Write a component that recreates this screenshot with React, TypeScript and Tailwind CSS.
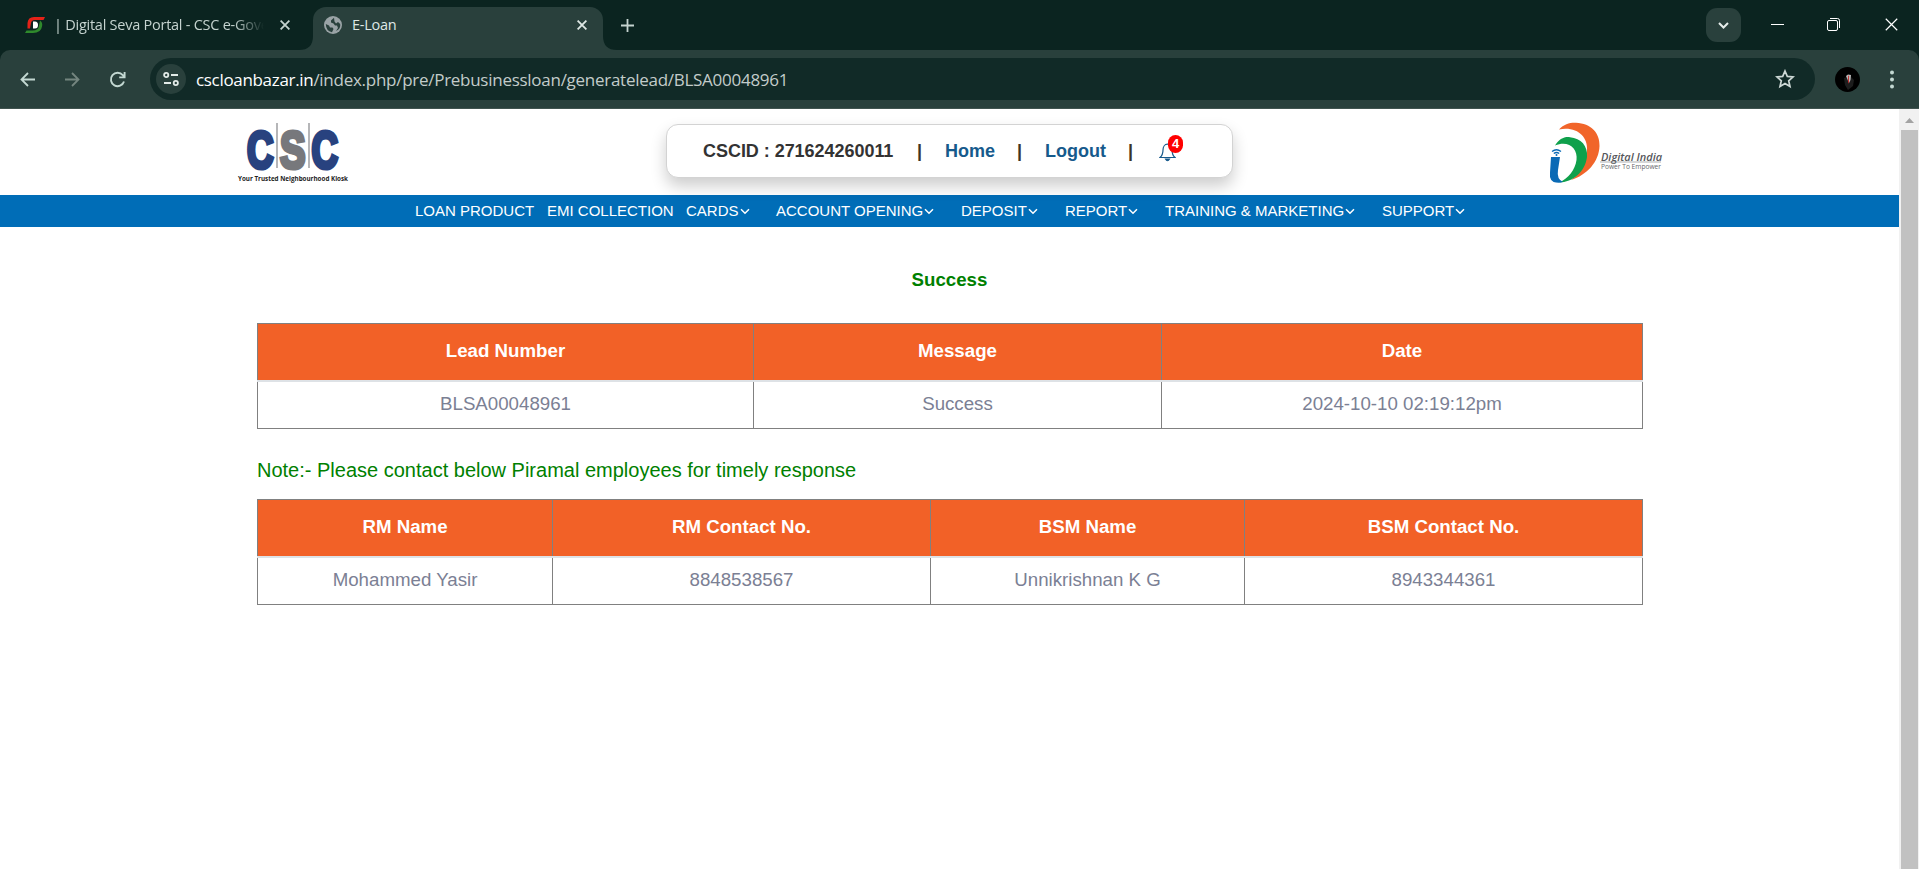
import React from "react";

const Cross = ({ size = 10, width = 1.8 }: { size?: number; width?: number }) => (
  <svg width={size} height={size} viewBox="0 0 10 10" fill="none" stroke="currentColor" strokeWidth={width}>
    <path d="M.6 .6 9.4 9.4M9.4 .6 .6 9.4" />
  </svg>
);

function TabStrip() {
  return (
    <div className="flex h-[50px] bg-[#0b2420] font-['Open_Sans',sans-serif] text-[14.5px] text-[#c5d3cf]">
      <div className="flex w-[313px] items-center pl-[25px]">
        <svg width="20" height="16" viewBox="0 0 20 16">
          <path d="M20 0H9Q3 0 2.500 6v5.500H5L6 6q.5-3 4-3h8.500z" fill="#e62218" />
          <path d="M15 3.500q3 2 2 6-1 6.500-9 6.500H0l1.500-2.500h6q6 0 6.500-5z" fill="#2f8a2c" />
          <path d="M8 4.500h2q3 0 3 3.500t-3 3.500H8z" fill="#fff" />
        </svg>
        <div className="ml-[9px] w-[210px] overflow-hidden whitespace-nowrap tracking-[-0.25px] [mask-image:linear-gradient(to_right,#000_180px,transparent_210px)]">
          | Digital Seva Portal - CSC e-Gove
        </div>
        <span className="ml-[16px]"><Cross /></span>
      </div>
      <div className="relative mt-[7px] flex h-[43px] w-[290px] items-center rounded-t-[13px] bg-[#29403c] pb-[7px] pl-[11px] text-[#dfe8e5]">
        <svg className="absolute bottom-0 -left-[14px]" width="14" height="14"><path d="M14 0v14H0Q14 14 14 0z" fill="#29403c" /></svg>
        <svg className="absolute -right-[14px] bottom-0" width="14" height="14"><path d="M0 0v14h14Q0 14 0 0z" fill="#29403c" /></svg>
        <svg width="18" height="18" viewBox="0 0 18 18">
          <circle cx="9" cy="9" r="9" fill="#9aa3a6" />
          <path d="M10 1.800 7 4.500v2l2.500 1 1.500 2h2l1 2.500-2 3Q17 13 16.200 8L14 6l-2 1.500-1.500-2zM1.800 8 5 9.500l1 2h2.500L9.500 13 8 16.200Q2 15 1.800 8z" fill="#29403c" />
        </svg>
        <span className="ml-[10px] w-[225px] tracking-[-0.25px]">E-Loan</span>
        <Cross />
      </div>
      <svg className="mt-[19px] ml-[18px]" width="13" height="13" fill="none" stroke="#c5d3cf" strokeWidth="1.800"><path d="M6.500 0v13M0 6.500h13" /></svg>
      <div className="ml-auto flex items-start text-white">
        <div className="mt-2 flex h-[34px] w-[35px] items-center justify-center rounded-[11px] bg-[#29403c]">
          <svg width="11" height="7" viewBox="0 0 11 7" fill="none" stroke="#e5ecea" strokeWidth="2"><path d="m1 1 4.500 4.500L10 1" /></svg>
        </div>
        <div className="mt-6 ml-[30px] h-px w-[13px] bg-white" />
        <svg className="mt-[18px] ml-[43px]" width="13" height="13" fill="none" stroke="#fff"><rect x=".5" y="2.500" width="10" height="10" rx="1.500" /><path d="M3 .5h7.500q2 0 2 2V10" /></svg>
        <span className="mt-[18px] mr-[21px] ml-[45px]"><Cross size={13} width={0.9} /></span>
      </div>
    </div>
  );
}

function Toolbar() {
  return (
    <div className="bg-[#0b2420]">
      <div className="flex h-[59px] items-center rounded-t-[10px] border-b border-[#40534f] bg-[#29403c] pl-[20px] text-[#c3d8d2]">
        <svg width="15" height="15" viewBox="0 0 15 15" fill="none" stroke="currentColor" strokeWidth="1.800"><path d="M15 7.500H1.500M8 1 1.500 7.500 8 14" /></svg>
        <svg className="ml-[30px] text-[#74857f]" width="15" height="15" viewBox="0 0 15 15" fill="none" stroke="currentColor" strokeWidth="1.800"><path d="M0 7.500h13.500M7 1l6.500 6.500L7 14" /></svg>
        <svg className="ml-[29px]" width="17" height="17" viewBox="0 0 17 17" fill="none" stroke="currentColor" strokeWidth="1.900"><path d="M15 10.500a6.700 6.700 0 1 1-1.200-6.300L15.300 6M15.600 1v5.400h-5.400" /></svg>
        <div className="ml-[24px] flex h-[42px] w-[1665px] items-center rounded-full bg-[#112a27] pl-[6px]">
          <div className="flex size-[30px] items-center justify-center rounded-full bg-[#29403c]">
            <svg width="16" height="14" viewBox="0 0 16 14" fill="none" stroke="#e3ebe8" strokeWidth="1.800"><circle cx="3.200" cy="3" r="2.100" /><path d="M8 3h7M1 11h7" /><circle cx="12.800" cy="11" r="2.100" /></svg>
          </div>
          <div className="ml-[10px] pt-px font-['Open_Sans',sans-serif] text-[17px] whitespace-nowrap text-[#c3ccca]">
            <span className="tracking-[-0.32px] text-white">cscloanbazar.in</span><span className="tracking-[-0.27px]">/index.php/pre/Prebusinessloan/generatelead/BLSA00048961</span>
          </div>
          <svg className="mr-[20px] ml-auto" width="20" height="20" viewBox="0 0 20 20" fill="none" stroke="#cdd8d5" strokeWidth="1.700"><path d="m10 2 2.300 5.400 5.800.5-4.400 3.900 1.300 5.700-5-3-5 3 1.300-5.700L1.900 7.900l5.800-.5z" /></svg>
        </div>
        <svg className="ml-[20px]" width="25" height="25" viewBox="0 0 25 25">
          <circle cx="12.500" cy="12.500" r="12.500" fill="#000" />
          <path d="m9 11 6-2 4 4-1 6-5 4-3-5z" fill="#1d1d1d" />
          <path d="m11 9 2-1.500 3 .5-.5 5-1.500 3z" fill="#bbb" />
          <path d="m13.200 8.500.9.500-.2 8-.8-2z" fill="#c81e1e" />
        </svg>
        <svg className="ml-[30px]" width="4" height="19" fill="currentColor"><circle cx="2" cy="2.500" r="2" /><circle cx="2" cy="9.500" r="2" /><circle cx="2" cy="16.500" r="2" /></svg>
      </div>
    </div>
  );
}

function CscLogo() {
  return (
    <svg width="112" height="66" viewBox="0 0 112 66">
      <g fontFamily="Liberation Sans" fontWeight="700" fontSize="51" strokeWidth="4.200">
        <text x="10" y="45.500" textLength="26.500" lengthAdjust="spacingAndGlyphs" fill="#28427f" stroke="#28427f">C</text>
        <text x="43" y="45.500" textLength="25.500" lengthAdjust="spacingAndGlyphs" fill="#77787c" stroke="#77787c">S</text>
        <text x="74.500" y="45.500" textLength="26.500" lengthAdjust="spacingAndGlyphs" fill="#28427f" stroke="#28427f">C</text>
      </g>
      <path d="M40 1v45M72 1v45" stroke="#85868a" strokeWidth="1.200" />
      <text x="1" y="58.500" fontFamily="Open Sans" fontWeight="700" fontSize="6.500" textLength="110" lengthAdjust="spacingAndGlyphs" fill="#222">Your Trusted Neighbourhood Kiosk</text>
    </svg>
  );
}

function DigitalIndiaLogo() {
  return (
    <svg width="114" height="62" viewBox="0 0 114 62">
      <path d="M10 7.500C15 2 21 .5 27 .8 42 1.500 51 11 50.500 24 50 40 38 53 22 58 31 52 37 41 38 28 39 15 28 4 10 7.500z" fill="#f1652a" />
      <path d="M6 23.500C10 17 15 14.500 21 15.200 32 16 39 24 38 35 36 50 24 60 10 60.500 20 56 26 48 27.500 38 29 27 20 18 6 23.500z" fill="#0fa04b" />
      <path d="M2 35h9L9 48q-1.500 9 5 12-3 1-7 .5-7-1-6-10z" fill="#0a6ab5" />
      <g fill="none" stroke="#0a6ab5" strokeWidth="1.300"><path d="M3 29.500q4.500-3.500 9 0M4.800 31.500q2.700-2 5.400 0" /></g>
      <circle cx="7.500" cy="33" r="1" fill="#0a6ab5" />
      <text x="52" y="38.500" fontFamily="Open Sans" fontStyle="italic" fontWeight="600" fontSize="10" textLength="61" lengthAdjust="spacingAndGlyphs" fill="#55565a">Digital India</text>
      <path d="M51 40h61" stroke="#77787c" strokeWidth=".6" />
      <text x="52" y="46.500" fontFamily="Open Sans" fontSize="6.200" textLength="60" lengthAdjust="spacingAndGlyphs" fill="#66676b">Power To Empower</text>
    </svg>
  );
}

function Header() {
  return (
    <header className="flex h-[86px] items-start">
      <div className="mt-[13px] ml-[237px]"><CscLogo /></div>
      <div className="mt-[15px] ml-[317px] flex h-[54px] w-[567px] items-center rounded-[12px] border border-[#d3d3d3] bg-white pt-px pl-[36px] text-[18px] font-bold text-[#165a8c] shadow-[0_8px_16px_0_rgba(0,0,0,0.2)]">
        <span className="w-[214px] tracking-[-0.04px] text-[#333]">CSCID : 271624260011</span>
        <span className="w-[28px] text-[#3c3426]">|</span>
        <span className="w-[72px]">Home</span>
        <span className="w-[28px] text-[#3c3426]">|</span>
        <span className="w-[83px]">Logout</span>
        <span className="w-[31px] text-[#3c3426]">|</span>
        <span className="relative">
          <svg width="17" height="20" viewBox="0 0 17 20" fill="none" stroke="#165a8c" strokeWidth="1.200"><path d="M8.500 2.200C5.500 2.200 4 5 4 8q0 5-3 7.500h15Q13 13 13 8c0-3-1.500-5.800-4.500-5.800z" /><path d="M6.500 17h4q-2 3.500-4 0z" fill="#165a8c" /></svg>
          <span className="absolute -top-[7px] left-[9px] flex h-[18px] w-[15px] items-center justify-center rounded-full bg-[#f00] text-[13px] leading-none text-white">4</span>
        </span>
      </div>
      <div className="mt-[13px] ml-[316px]"><DigitalIndiaLogo /></div>
    </header>
  );
}

const menus = [
  { label: "CARDS", width: "w-[90px]" },
  { label: "ACCOUNT OPENING", width: "w-[185px]" },
  { label: "DEPOSIT", width: "w-[104px]" },
  { label: "REPORT", width: "w-[100px]" },
  { label: "TRAINING & MARKETING", width: "w-[217px]" },
  { label: "SUPPORT", width: "w-[90px]" },
];

function Nav() {
  return (
    <nav className="flex h-8 items-center bg-[#006db7] pt-px pl-[415px] text-[15px] whitespace-nowrap text-white">
      <span className="w-[132px]">LOAN PRODUCT</span>
      <span className="w-[139px]">EMI COLLECTION</span>
      {menus.map((m) => (
        <span key={m.label} className={"flex items-center gap-px " + m.width}>
          {m.label}
          <svg width="10" height="7" viewBox="0 0 10 7" fill="none" stroke="currentColor" strokeWidth="1.500"><path d="m1 1.200 4 4 4-4" /></svg>
        </span>
      ))}
    </nav>
  );
}

function DataTable({ columns, rows, widths }: { columns: string[]; rows: string[][]; widths: string[] }) {
  return (
    <table className="w-[1385px] table-fixed border-collapse text-center text-[18.7px]">
      <thead>
        <tr className="h-[57px] bg-[#f26127] text-white">
          {columns.map((c, i) => (
            <th key={c} className={"border border-b-2 border-[#808080] border-b-[#dee2e6] p-0 pb-px font-bold " + widths[i]}>{c}</th>
          ))}
        </tr>
      </thead>
      <tbody>
        {rows.map((r) => (
          <tr key={r[0]} className="h-[48px] text-[#7b8094]">
            {r.map((v) => <td key={v} className="border border-[#808080] p-0 pb-[2px]">{v}</td>)}
          </tr>
        ))}
      </tbody>
    </table>
  );
}

export default function App() {
  return (
    <div className="h-[869px] w-[1919px] overflow-hidden bg-white font-['Liberation_Sans',Arial,sans-serif]">
      <TabStrip />
      <Toolbar />
      <div className="flex h-[760px]">
        <div className="w-[1899px]">
          <Header />
          <Nav />
          <main className="pl-[257px]">
            <h1 className="w-[1385px] pt-[39px] text-center text-[18.7px] leading-7 font-bold text-[#008000]">Success</h1>
            <div className="mt-[29px]">
              <DataTable
                columns={["Lead Number", "Message", "Date"]}
                rows={[["BLSA00048961", "Success", "2024-10-10 02:19:12pm"]]}
                widths={["w-[496px]", "w-[408px]", "w-[481px]"]}
              />
            </div>
            <p className="mt-[27px] mb-[15px] text-[20px] leading-7 whitespace-nowrap text-[#008000]">Note:- Please contact below Piramal employees for timely response</p>
            <DataTable
              columns={["RM Name", "RM Contact No.", "BSM Name", "BSM Contact No."]}
              rows={[["Mohammed Yasir", "8848538567", "Unnikrishnan K G", "8943344361"]]}
              widths={["w-[295px]", "w-[378px]", "w-[314px]", "w-[398px]"]}
            />
          </main>
        </div>
        <div className="flex w-5 flex-col items-center bg-[#f1f1f1] pt-[9px]">
          <svg width="9" height="5"><path d="M0 5 4.500 0 9 5z" fill="#a3a3a3" /></svg>
          <div className="mt-[7px] w-[17px] flex-1 bg-[#c1c1c1]" />
        </div>
      </div>
    </div>
  );
}
